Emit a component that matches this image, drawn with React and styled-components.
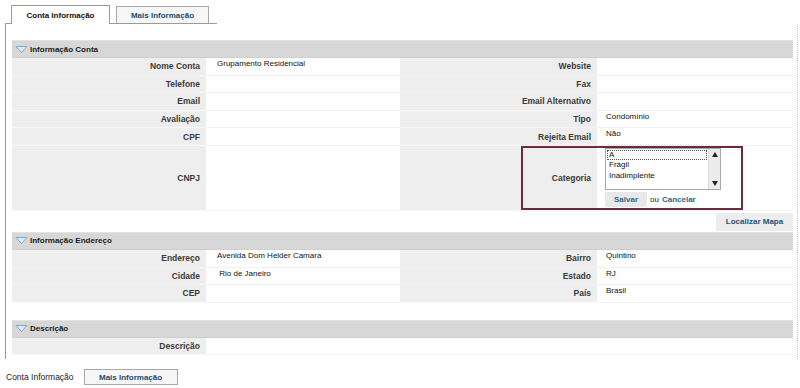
import React from "react";
import styled, { createGlobalStyle } from "styled-components";

const GlobalStyle = createGlobalStyle`
  html, body {
    margin: 0;
    padding: 0;
    background: #ffffff;
    font-family: "Liberation Sans", Arial, sans-serif;
  }
`;

const contaRows = [
  ["Nome Conta", "Grupamento Residencial", "Website", ""],
  ["Telefone", "", "Fax", ""],
  ["Email", "", "Email Alternativo", ""],
  ["Avaliação", "", "Tipo", "Condomínio"],
  ["CPF", "", "Rejeita Email", "Não"],
];

const enderecoRows = [
  ["Endereço", "Avenida Dom Helder Camara", "Bairro", "Quintino"],
  ["Cidade", " Rio de Janeiro", "Estado", "RJ"],
  ["CEP", "", "País", "Brasil"],
];

const categorias = ["A", "Frágil", "Inadimplente"];

const Chevron = () => (
  <svg width="13" height="9" viewBox="0 0 13 9">
    <polygon
      points="1,1.5 12,1.5 6.5,7.5"
      fill="#dbe9f6"
      stroke="#7fa9d1"
      strokeWidth="1"
      strokeLinejoin="round"
    />
  </svg>
);

const Arrow = ({ up }) => (
  <svg width="6" height="5" viewBox="0 0 6 5">
    <polygon points={up ? "0,5 6,5 3,0" : "0,0 6,0 3,5"} fill="#222" />
  </svg>
);

const App = () => {
  return (
    <Page>
      <GlobalStyle />
      <TabBar>
        <ActiveTab>Conta Informação</ActiveTab>
        <Tab>Mais Informação</Tab>
      </TabBar>

      <Panel>
        <SectionHeader>
          <Chevron />
          Informação Conta
        </SectionHeader>
        <FieldGrid>
          {contaRows.map((r) => (
            <React.Fragment key={r[0]}>
              <Label>{r[0]}</Label>
              <Value>{r[1]}</Value>
              <Label>{r[2]}</Label>
              <Value $right>{r[3]}</Value>
            </React.Fragment>
          ))}
          <Label $tall>CNPJ</Label>
          <Value />
          <EditCell>
            <Label $tall>Categoria</Label>
            <EditValue>
              <ListBox>
                <ListItems>
                  {categorias.map((c, i) => (
                    <ListItem key={c} $focused={i === 0}>
                      {c}
                    </ListItem>
                  ))}
                </ListItems>
                <ScrollBar>
                  <Arrow up />
                  <Arrow />
                </ScrollBar>
              </ListBox>
              <Actions>
                <SaveButton>Salvar</SaveButton>
                <Plain>ou</Plain>
                <LinkText>Cancelar</LinkText>
              </Actions>
            </EditValue>
            <EditFrame />
          </EditCell>
        </FieldGrid>

        <MapRow>
          <MapButton>Localizar Mapa</MapButton>
        </MapRow>

        <SectionHeader>
          <Chevron />
          Informação Endereço
        </SectionHeader>
        <FieldGrid>
          {enderecoRows.map((r) => (
            <React.Fragment key={r[0]}>
              <Label>{r[0]}</Label>
              <Value>{r[1]}</Value>
              <Label>{r[2]}</Label>
              <Value $right>{r[3]}</Value>
            </React.Fragment>
          ))}
        </FieldGrid>

        <Spacer />

        <SectionHeader>
          <Chevron />
          Descrição
        </SectionHeader>
        <FieldGrid>
          <Label>Descrição</Label>
          <Value $span />
        </FieldGrid>
      </Panel>

      <BottomTabs>
        <PlainTab>Conta Informação</PlainTab>
        <Tab $boxed>Mais Informação</Tab>
      </BottomTabs>
    </Page>
  );
};

export default App;

const Page = styled.div`
  width: 800px;
  height: 388px;
  overflow: hidden;
  background: #ffffff;
`;

const TabBar = styled.div`
  display: flex;
  align-items: flex-end;
  gap: 6px;
  width: 206px;
  height: 23px;
  margin-left: 5px;
  padding-left: 6px;
  border-bottom: 1px solid #9a9a9a;
`;

const ActiveTab = styled.div`
  width: 99px;
  height: 19px;
  margin-bottom: -1px;
  box-sizing: border-box;
  border: 1px solid #9a9a9a;
  border-bottom: none;
  background: #ffffff;
  display: flex;
  align-items: center;
  justify-content: center;
  font-size: 8px;
  font-weight: 700;
  color: #111;
`;

const Tab = styled.div`
  width: ${(p) => (p.$boxed ? "94px" : "93px")};
  height: ${(p) => (p.$boxed ? "16px" : "17px")};
  box-sizing: border-box;
  border: 1px solid #a8a8a8;
  border-bottom: ${(p) => (p.$boxed ? "1px solid #a8a8a8" : "none")};
  background: #f6f6f6;
  display: flex;
  align-items: center;
  justify-content: center;
  font-size: 8px;
  font-weight: 700;
  color: #1d4b6e;
`;

const Panel = styled.div`
  margin-left: 5px;
  margin-right: 2px;
  padding: 16px 4px 4px 6px;
  border-left: 1px solid #9a9a9a;
  border-right: 1px dotted #c8c8c8;
`;

const SectionHeader = styled.div`
  height: 18px;
  box-sizing: border-box;
  display: flex;
  align-items: center;
  gap: 2px;
  padding-left: 3px;
  background: #d7d7d7;
  border-top: 1px solid #e2e2e2;
  border-bottom: 1px solid #cfcfcf;
  font-size: 8px;
  font-weight: 700;
  color: #1a1a1a;
`;

const FieldGrid = styled.div`
  display: grid;
  grid-template-columns: 194px 194px 197px 195px;
`;

const Label = styled.div`
  height: ${(p) => (p.$tall ? "65px" : "17.6px")};
  box-sizing: border-box;
  display: flex;
  align-items: center;
  justify-content: flex-end;
  padding-right: 6px;
  background: #eeeeee;
  border-bottom: 1px solid #f8f8f8;
  font-size: 8.5px;
  font-weight: 700;
  color: #3a3a3a;
`;

const Value = styled.div`
  box-sizing: border-box;
  padding: 1px 0 0 ${(p) => (p.$right ? "9px" : "11px")};
  grid-column: ${(p) => (p.$span ? "2 / 5" : "auto")};
  border-bottom: 1px solid #f3f3f3;
  font-size: 8px;
  line-height: 10px;
  color: #111;
  white-space: pre;
`;

const EditCell = styled.div`
  grid-column: 3 / 5;
  position: relative;
  display: grid;
  grid-template-columns: 197px 195px;
`;

const EditValue = styled.div`
  padding: 2px 0 0 8px;
  display: flex;
  flex-direction: column;
  gap: 2px;
  border-bottom: 1px solid #f3f3f3;
`;

const ListBox = styled.div`
  width: 116px;
  height: 42px;
  box-sizing: border-box;
  border: 1px solid #a6aab0;
  background: #ffffff;
  display: flex;
`;

const ListItems = styled.div`
  flex: 1;
  padding: 1px;
`;

const ListItem = styled.div`
  font-size: 8px;
  line-height: 10.5px;
  padding-left: 2px;
  color: #111;
  outline: ${(p) => (p.$focused ? "1px dotted #555" : "none")};
  outline-offset: -1px;
`;

const ScrollBar = styled.div`
  width: 11px;
  background: #ececec;
  border-left: 1px solid #dadada;
  display: flex;
  flex-direction: column;
  align-items: center;
  justify-content: space-between;
  padding: 3px 0;
`;

const Actions = styled.div`
  display: flex;
  align-items: center;
  gap: 3px;
  font-size: 8px;
`;

const SaveButton = styled.div`
  width: 42px;
  height: 15px;
  background: #e8e8e8;
  display: flex;
  align-items: center;
  justify-content: center;
  font-weight: 700;
  color: #2f6588;
`;

const Plain = styled.span`
  color: #222;
`;

const LinkText = styled.span`
  font-weight: 700;
  color: #2f6588;
`;

const EditFrame = styled.div`
  position: absolute;
  left: 121px;
  top: 0;
  width: 222px;
  height: 64px;
  box-sizing: border-box;
  border: 2px solid #6d2b38;
  pointer-events: none;
`;

const MapRow = styled.div`
  display: flex;
  justify-content: flex-end;
  padding: 2px 0 1px;
`;

const MapButton = styled.div`
  width: 77px;
  height: 18px;
  background: #ededed;
  display: flex;
  align-items: center;
  justify-content: center;
  font-size: 8px;
  font-weight: 700;
  color: #2a5174;
`;

const Spacer = styled.div`
  height: 17px;
`;

const BottomTabs = styled.div`
  display: flex;
  align-items: center;
  gap: 10px;
  margin-top: 10px;
  padding-left: 6px;
`;

const PlainTab = styled.div`
  font-size: 8.5px;
  color: #222;
`;
